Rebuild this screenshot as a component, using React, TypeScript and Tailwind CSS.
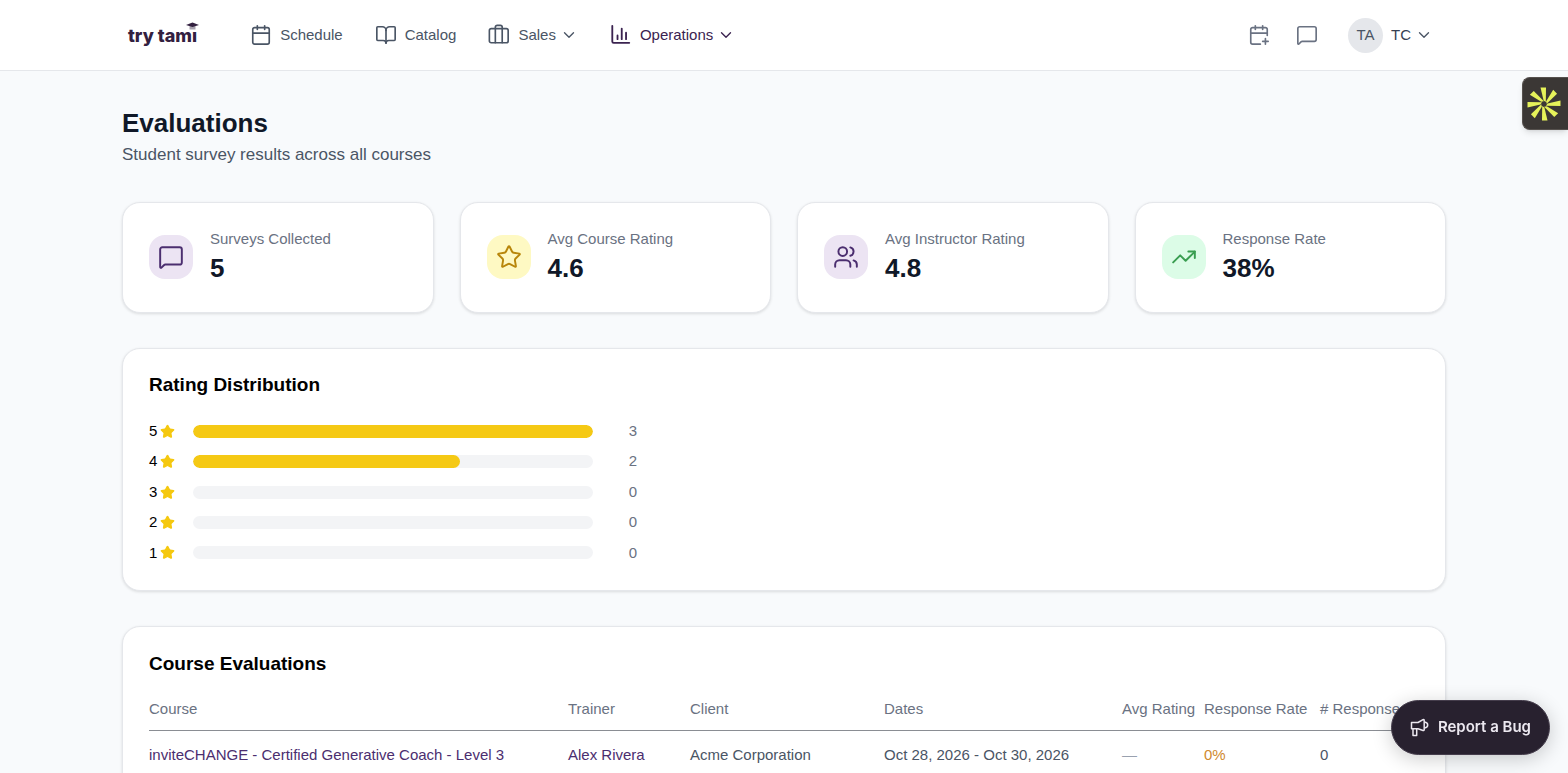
import {
	BookOpen,
	Calendar,
	CalendarPlus,
	ChevronDown,
	MessageSquare,
	Star,
	TrendingUp,
	Users,
} from "lucide-react";

const stats = [
	{ label: "Surveys Collected", value: "5", icon: MessageSquare, tone: "bg-[#ece4f3] text-[#4b2e6f]" },
	{ label: "Avg Course Rating", value: "4.6", icon: Star, tone: "bg-[#fef9c3] text-[#b8860b]" },
	{ label: "Avg Instructor Rating", value: "4.8", icon: Users, tone: "bg-[#ece4f3] text-[#4b2e6f]" },
	{ label: "Response Rate", value: "38%", icon: TrendingUp, tone: "bg-[#dcfce7] text-[#3a9e51]" },
];

const ratings = [
	{ stars: 5, count: 3 },
	{ stars: 4, count: 2 },
	{ stars: 3, count: 0 },
	{ stars: 2, count: 0 },
	{ stars: 1, count: 0 },
];

const maxCount = Math.max(...ratings.map((rating) => rating.count));

const columns = [
	{ label: "Course", width: "w-[419px]" },
	{ label: "Trainer", width: "w-[122px]" },
	{ label: "Client", width: "w-[194px]" },
	{ label: "Dates", width: "w-[238px]" },
	{ label: "Avg Rating", width: "w-[82px]" },
	{ label: "Response Rate", width: "w-[116px]" },
	{ label: "# Responses", width: "" },
];

const courses = [
	{
		name: "inviteCHANGE - Certified Generative Coach - Level 3",
		trainer: "Alex Rivera",
		client: "Acme Corporation",
		dates: "Oct 28, 2026 - Oct 30, 2026",
		rating: "—",
		rate: "0%",
		responses: 0,
	},
];

const cardBase = "rounded-[18px] border border-gray-200 bg-white shadow-[0_1px_3px_rgba(0,0,0,0.12)]";

const Logo = () => (
	<a href="#" className="relative block pt-[2px] font-[Inter,sans-serif] text-lg font-extrabold text-[#32203f]">
		try tami
		<svg className="absolute top-[2px] -right-[2px]" width="13" height="9" viewBox="0 0 13 9">
			<path d="M2 2h9v7H2z" fill="#fff" />
			<path d="M3.500 4v3.500h6V4z" fill="#a8a2ae" />
			<path d="M0 3L6.500 .5 13 3 6.500 5z" fill="#32203f" />
		</svg>
	</a>
);

const SuitcaseIcon = () => (
	<svg width="22" height="22" viewBox="0 0 24 24" fill="none" stroke="currentColor" strokeWidth="1.800" strokeLinecap="round" strokeLinejoin="round">
		<rect x="1.500" y="5" width="20.500" height="15.500" rx="2" />
		<path d="M8 20.500V3.500a2 2 0 0 1 2-2h3.500a2 2 0 0 1 2 2v17" />
	</svg>
);

const ReportIcon = () => (
	<svg width="22" height="22" viewBox="0 0 24 24" fill="none" stroke="currentColor" strokeWidth="2" strokeLinecap="round" strokeLinejoin="round">
		<path d="M2.500 2v17q0 1.500 1.500 1.500h17" />
		<path d="M8.200 16.500v-4M12.800 16.500V5M17.500 16.500V9.500" />
	</svg>
);

const MegaphoneIcon = () => (
	<svg width="20" height="20" viewBox="0 0 20 20" fill="none" stroke="currentColor" strokeWidth="1.500" strokeLinejoin="round">
		<path d="M1.500 4.500H8l5-2.800q1.200-.4 1.200.8v9.300q0 1-1.200.7L8 10.800H1.500z" />
		<path d="M3 11v6.500h3.700V11M14.500 4q3.200.5 3.200 3t-3.200 3" />
	</svg>
);

const burstAngles = [0, 45, 90, 135, 180, 225, 270, 315];

const BurstIcon = () => (
	<svg width="34" height="34" viewBox="-17 -17 34 34" fill="#e6f25a">
		{burstAngles.map((angle) => (
			<path key={angle} d="M-3.500-16.500L2-16.500 1.800-2-.4-3.500z" transform={`rotate(${angle})`} />
		))}
	</svg>
);

const Header = () => (
	<header className="border-b border-gray-200 bg-white">
		<div className="mx-auto flex h-[70px] max-w-[1324px] items-center justify-between pr-[13px] pl-[6px]">
			<div className="flex items-center gap-[53px] text-[15px] text-gray-600">
				<Logo />
				<nav className="flex items-center gap-8">
					<a href="#" className="flex items-center gap-2">
						<Calendar size={22} strokeWidth={1.8} />
						Schedule
					</a>
					<a href="#" className="flex items-center gap-2">
						<BookOpen size={22} strokeWidth={1.8} />
						Catalog
					</a>
					<button type="button" className="flex items-center gap-1">
						<span className="flex items-center gap-2">
							<SuitcaseIcon />
							Sales
						</span>
						<ChevronDown size={18} strokeWidth={1.8} />
					</button>
					<button type="button" className="flex items-center gap-1 text-[#3b2350]">
						<span className="flex items-center gap-2">
							<ReportIcon />
							Operations
						</span>
						<ChevronDown size={18} strokeWidth={1.8} />
					</button>
				</nav>
			</div>
			<div className="flex items-center gap-[30px] text-gray-500">
				<div className="flex items-center gap-[26px]">
					<button type="button" aria-label="Add event">
						<CalendarPlus size={22} strokeWidth={1.8} />
					</button>
					<button type="button" aria-label="Messages">
						<MessageSquare size={22} strokeWidth={1.8} />
					</button>
				</div>
				<button type="button" className="flex items-center gap-1 text-[15px] text-gray-600">
					<span className="flex items-center gap-2">
						<span className="flex size-[35px] items-center justify-center rounded-full bg-gray-200">TA</span>
						<span className="text-gray-700">TC</span>
					</span>
					<ChevronDown size={18} strokeWidth={1.8} />
				</button>
			</div>
		</div>
	</header>
);

const App = () => {
	return (
		<div className="min-h-screen bg-[#f8fafc] font-['Liberation_Sans',Arial,sans-serif] text-black">
			<Header />

			<main className="mx-auto flex max-w-[1324px] flex-col gap-[34px] pt-[35px] pb-12">
				<div>
					<h1 className="text-[26px] leading-[34px] font-bold text-gray-900">Evaluations</h1>
					<p className="text-[17px] leading-[29px] text-gray-600">Student survey results across all courses</p>
				</div>

				<section className="-mt-px mb-px grid grid-cols-4 gap-[26px]">
					{stats.map(({ label, value, icon: Icon, tone }) => (
						<article key={label} className={`${cardBase} flex items-center gap-[17px] px-[26px] pt-6 pb-[26px]`}>
							<div className={`flex size-11 items-center justify-center rounded-2xl ${tone}`}>
								<Icon size={26} strokeWidth={1.8} />
							</div>
							<div>
								<p className="text-[15px] leading-6 text-gray-500">{label}</p>
								<p className="text-[26px] leading-[35px] font-bold text-gray-900">{value}</p>
							</div>
						</article>
					))}
				</section>

				{/* Rating distribution */}
				<section className={`${cardBase} mb-px px-[26px] pt-[22px] pb-[26px]`}>
					<h2 className="text-[19px] leading-7 font-bold">Rating Distribution</h2>
					<ul className="mt-[21px] flex h-36 max-w-[488px] flex-col justify-between">
						{ratings.map(({ stars, count }) => (
							<li key={stars} className="flex items-center text-[15px]">
								<span className="flex w-11 items-center gap-[3px]">
									{stars}
									<Star size={15} className="fill-[#f5c80f] text-[#f5c80f]" />
								</span>
								<span className="h-[13px] flex-1 overflow-hidden rounded-full bg-gray-100">
									<span
										className="block h-full rounded-full bg-[#f5c914]"
										style={{ width: `${(count / maxCount) * 100}%` }}
									/>
								</span>
								<span className="w-11 text-right text-gray-500">{count}</span>
							</li>
						))}
					</ul>
				</section>

				{/* Course table */}
				<section className={`${cardBase} px-[26px] pt-[23px] pb-[26px]`}>
					<h2 className="text-[19px] leading-7 font-bold">Course Evaluations</h2>
					<table className="mt-[11px] w-full table-fixed text-left text-[15px] whitespace-nowrap">
						<thead>
							<tr className="h-[41px] border-b border-[#8a8d93] text-gray-500">
								{columns.map(({ label, width }) => (
									<th key={label} className={`${width} font-normal`}>
										{label}
									</th>
								))}
							</tr>
						</thead>
						<tbody>
							{courses.map((course) => (
								<tr key={course.name} className="h-[49px] text-gray-600">
									<td>
										<a href="#" className="text-[#4b2e6f]">{course.name}</a>
									</td>
									<td>
										<a href="#" className="text-[#4b2e6f]">{course.trainer}</a>
									</td>
									<td>{course.client}</td>
									<td>{course.dates}</td>
									<td className="text-gray-400">{course.rating}</td>
									<td className="text-[#d08a2e]">{course.rate}</td>
									<td>{course.responses}</td>
								</tr>
							))}
						</tbody>
					</table>
				</section>
			</main>

			<button
				type="button"
				aria-label="Open assistant"
				className="fixed top-[77px] right-0 flex h-[53px] w-[46px] items-center justify-center rounded-l-lg border border-r-0 border-[#56514e] bg-[#3b3735] pr-[3px] shadow-md"
			>
				<BurstIcon />
			</button>
			<button
				type="button"
				className="fixed right-[18px] bottom-[18px] flex h-[55px] items-center gap-2 rounded-full border border-[#453d4c] bg-[#28212f] px-[18px] font-[Inter,sans-serif] text-[15px] font-semibold text-[#ece8f0] shadow-[0_4px_20px_rgba(0,0,0,0.2)]"
			>
				<MegaphoneIcon />
				Report a Bug
			</button>
		</div>
	);
};

export default App;
